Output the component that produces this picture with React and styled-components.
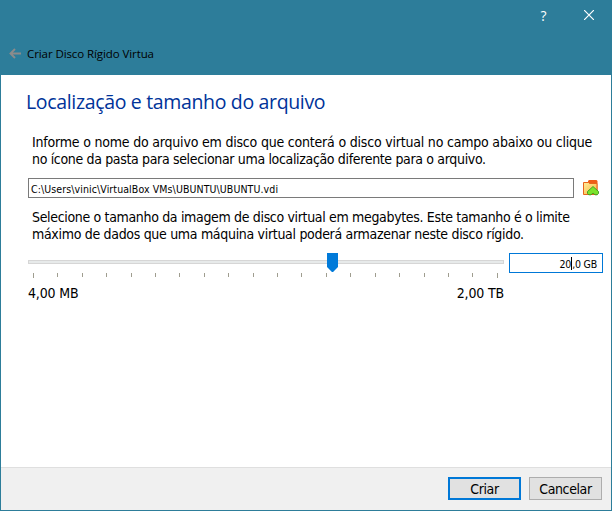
import React from "react";
import styled, { createGlobalStyle } from "styled-components";

const Global = createGlobalStyle`
  * { box-sizing: border-box; }
  body { margin: 0; background: #2d7d9a; }
`;

const Window = styled.div`
  width: 612px;
  height: 511px;
  display: flex;
  flex-direction: column;
  background: #2d7d9a;
  font-family: "DejaVu Sans Condensed", "DejaVu Sans", "Noto Sans", sans-serif;
  font-size: 14px;
  color: #000;
  overflow: hidden;
`;

const TitleBar = styled.header`
  flex: none;
  height: 75px;
  display: flex;
  flex-direction: column;
`;

const Controls = styled.div`
  height: 32px;
  display: flex;
  justify-content: flex-end;
  padding-right: 1px;
`;

const ControlButton = styled.button`
  width: 45px;
  height: 30px;
  padding: 0;
  border: 0;
  background: none;
  color: #fff;
  display: flex;
  align-items: center;
  justify-content: center;
  font: 14px "Open Sans", sans-serif;
`;

const Crumb = styled.div`
  height: 43px;
  display: flex;
  align-items: center;
  gap: 5px;
  padding-left: 9px;
  font-family: "Open Sans", sans-serif;
  font-size: 11.5px;
  letter-spacing: -0.09px;
`;

const Page = styled.main`
  flex: 1;
  margin: 0 1px;
  background: #fff;
  padding: 15px 8px 0 27px;
`;

const Heading = styled.h1`
  margin: 0 0 0 -2px;
  height: 24px;
  font: 400 19.5px/24px "Open Sans", sans-serif;
  letter-spacing: -0.34px;
  color: #003399;
`;

const Paragraph = styled.p`
  margin: ${(p) => p.$top}px 0 0 4px;
`;

const Line = styled.span`
  display: block;
  height: 17px;
  line-height: 17px;
  white-space: nowrap;
  letter-spacing: ${(p) => p.$tracking}px;
`;

const FileRow = styled.div`
  display: flex;
  align-items: center;
  gap: 8px;
  margin-top: 10px;
`;

const PathField = styled.div`
  width: 546px;
  height: 20px;
  border: 1px solid #7a7a7a;
  padding: 1px 0 0 2px;
  font-size: 10.5px;
  line-height: 18px;
  letter-spacing: 0.1px;
  white-space: nowrap;
`;

const SizeRow = styled.div`
  display: flex;
  align-items: flex-start;
  gap: 5px;
  margin-top: 10px;
`;

const Slider = styled.div`
  width: 476px;
`;

const Groove = styled.div`
  position: relative;
  height: 4px;
  margin-top: 7px;
  border: 1px solid #d6d6d6;
  background: #e7eaea;
`;

const Thumb = styled.div`
  position: absolute;
  left: 298px;
  top: -8px;
  width: 11px;
  height: 19px;
  background: #007ad9;
  clip-path: polygon(0 0, 100% 0, 100% 74%, 55% 100%, 45% 100%, 0 74%);
`;

const Ticks = styled.div`
  display: flex;
  justify-content: space-between;
  margin-top: 9px;
  padding: 0 6px 0 5px;
  height: 5px;
`;

const Tick = styled.i`
  width: 1px;
  height: 4px;
  background: #9f9d8f;

  &:first-child,
  &:last-child {
    height: 5px;
  }
`;

const Range = styled.div`
  display: flex;
  justify-content: space-between;
  margin-top: 6px;
  line-height: 18px;
  letter-spacing: -0.15px;
`;

const SizeField = styled.div`
  width: 94px;
  height: 20px;
  border: 1px solid #0078d7;
  padding: 2px 5px 0 0;
  display: flex;
  justify-content: flex-end;
  font-size: 10.5px;
  line-height: 17px;
  letter-spacing: -0.2px;
  white-space: pre;
`;

const Caret = styled.i`
  width: 1px;
  height: 13px;
  margin-top: 1px;
  background: #000;
`;

const Footer = styled.footer`
  flex: none;
  height: 43px;
  margin: 0 1px 1px;
  border-top: 1px solid #dfdfdf;
  background: #f0f0f0;
  display: flex;
  align-items: flex-start;
  justify-content: flex-end;
  gap: 8px;
  padding: 9px 9px 0 0;
`;

const Button = styled.button`
  width: 73px;
  height: 23px;
  padding: 1px 0 0;
  border: ${(p) => (p.$primary ? "2px solid #0078d7" : "1px solid #adadad")};
  background: #e1e1e1;
  color: #000;
  font-family: inherit;
  font-size: 14px;
  line-height: 18px;
  letter-spacing: -0.4px;
`;

const BackIcon = () => (
  <svg width="13" height="11" viewBox="0 0 13 11" fill="none" stroke="#8b8b8b" strokeWidth="1.9">
    <path d="M12 5.5H1.5M6 1L1.5 5.5 6 10" />
  </svg>
);

const CloseIcon = () => (
  <svg width="10" height="10" viewBox="0 0 10 10" stroke="#fff" strokeWidth="1.2">
    <path d="M0 0L10 10M10 0L0 10" />
  </svg>
);

const FolderIcon = () => (
  <svg width="18" height="18" viewBox="0 0 18 18">
    <defs>
      <linearGradient id="folder" x1="0" y1="0" x2="1" y2="1">
        <stop offset="0" stopColor="#ffec9c" />
        <stop offset="1" stopColor="#f9b53c" />
      </linearGradient>
    </defs>
    <path d="M6 4V2L7 1h7.5l1 1V15H6z" fill="#ee5d17" />
    <path d="M1.5 3.5h5l1 1h7.5V15.5H1.5z" fill="url(#folder)" stroke="#e8641c" />
    <path
      d="M11 7.5L5.5 12.5v2l1.3 1.3H9l2-1.8 2 1.8h2.2l1.3-1.3v-2z"
      fill="#7be32c"
      stroke="#38991f"
      strokeWidth="0.9"
    />
  </svg>
);

const TICKS = Array.from({ length: 20 }, (_, i) => i);

export default function App() {
  return (
    <Window>
      <Global />
      <TitleBar>
        <Controls>
          <ControlButton>?</ControlButton>
          <ControlButton>
            <CloseIcon />
          </ControlButton>
        </Controls>
        <Crumb>
          <BackIcon />
          Criar Disco Rígido Virtua
        </Crumb>
      </TitleBar>
      <Page>
        <Heading>Localização e tamanho do arquivo</Heading>
        <Paragraph $top={20}>
          <Line $tracking={-0.2}>
            Informe o nome do arquivo em disco que conterá o disco virtual no campo abaixo ou clique
          </Line>
          <Line $tracking={-0.34}>
            no ícone da pasta para selecionar uma localização diferente para o arquivo.
          </Line>
        </Paragraph>
        <FileRow>
          <PathField>C:\Users\vinic\VirtualBox VMs\UBUNTU\UBUNTU.vdi</PathField>
          <FolderIcon />
        </FileRow>
        <Paragraph $top={11}>
          <Line $tracking={-0.335}>
            Selecione o tamanho da imagem de disco virtual em megabytes. Este tamanho é o limite
          </Line>
          <Line $tracking={-0.31}>
            máximo de dados que uma máquina virtual poderá armazenar neste disco rígido.
          </Line>
        </Paragraph>
        <SizeRow>
          <Slider>
            <Groove>
              <Thumb />
            </Groove>
            <Ticks>
              {TICKS.map((n) => (
                <Tick key={n} />
              ))}
            </Ticks>
            <Range>
              <span>4,00 MB</span>
              <span>2,00 TB</span>
            </Range>
          </Slider>
          <SizeField>
            20
            <Caret />
            ,0 GB
          </SizeField>
        </SizeRow>
      </Page>
      <Footer>
        <Button $primary>Criar</Button>
        <Button>Cancelar</Button>
      </Footer>
    </Window>
  );
}
